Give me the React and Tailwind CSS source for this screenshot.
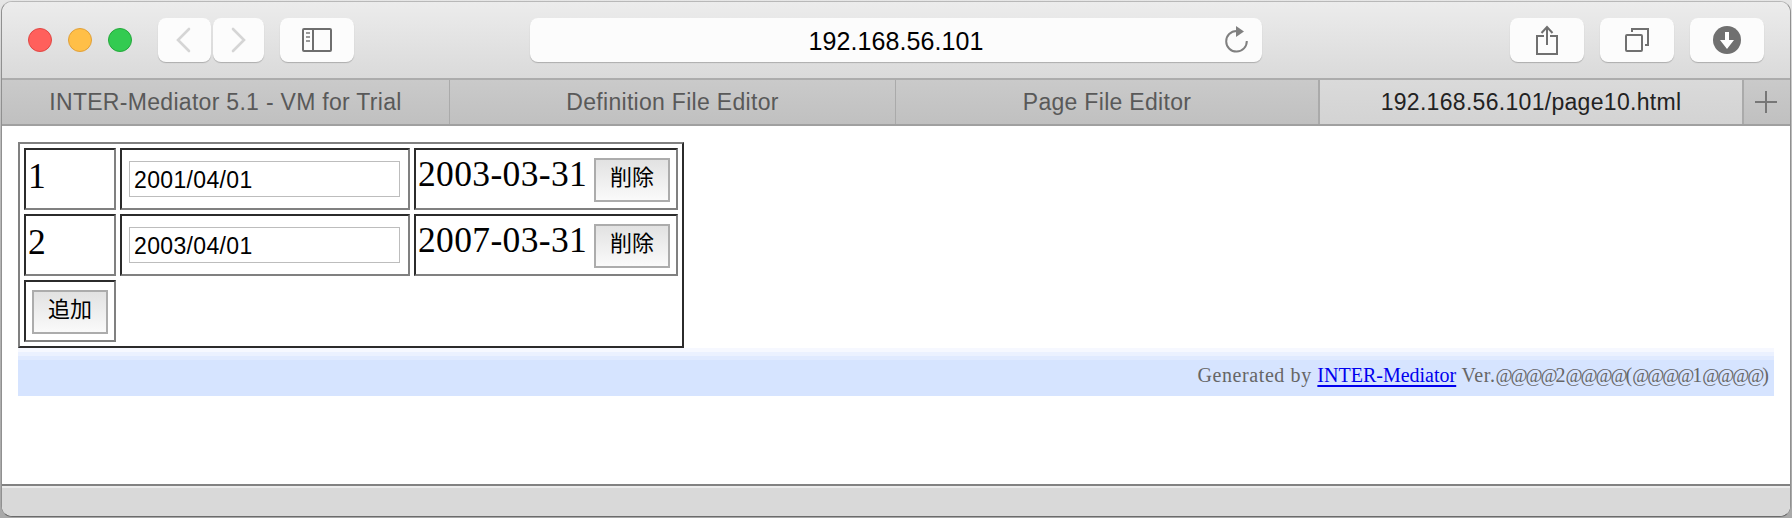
const btn = "flex h-11 items-center justify-center rounded-lg bg-[#fcfcfc] shadow-[0_1px_1px_rgba(0,0,0,0.22)]";
const tab = "flex h-full items-center justify-center border-[#aaaaaa] text-[23px] leading-none tracking-[0.3px]";
const cell = "border-2 border-t-[#2b2b2b] border-l-[#2b2b2b] border-r-[#808080] border-b-[#808080]";

function PushButton({ children }) {
  return (
    <button className="h-11 w-[76px] shrink-0 border-2 border-[#acacac] bg-linear-to-b from-[#e2e2e2] to-[#fafafa] pb-1 font-['Liberation_Sans','Noto_Sans_CJK_JP',sans-serif] text-[22px] leading-none text-black">
      {children}
    </button>
  );
}

function Row({ id, start, end }) {
  return (
    <div className="flex h-[62px] gap-1">
      <div className={`${cell} w-[92px] pt-1.5 pl-0.5 text-[35.5px] leading-[40px]`}>{id}</div>
      <div className={`${cell} w-[290px] pt-[11px] pl-[7px]`}>
        <input
          readOnly
          value={start}
          className="block h-9 w-[271px] border border-[#bdbdbd] bg-white pt-0.5 pl-1 font-['Liberation_Sans',sans-serif] text-[23px] tracking-[0.35px] outline-none"
        />
      </div>
      <div className={`${cell} flex w-[264px] items-start pr-1.5 pl-[2px]`}>
        <span className="pt-1 text-[35.5px] leading-[40px] tracking-[0.35px]">{end}</span>
        <div className="ml-auto pt-2">
          <PushButton>削除</PushButton>
        </div>
      </div>
    </div>
  );
}

function Ats() {
  return <span className="text-[18.5px] tracking-[-2.03px]">@@@@</span>;
}

export default function App() {
  return (
    <div className="h-[518px] w-[1792px] bg-linear-to-b from-[#e6e6e6] via-[#bcbcbc] via-25% to-[#a8a8a8] p-px font-['Liberation_Serif','Noto_Sans_CJK_JP',serif] text-black">
      <div className="flex h-[516px] flex-col overflow-hidden rounded-[11px] border border-t-[#b8b8b8] border-r-[#909090] border-b-[#6b6b6b] border-l-[#909090] bg-white">
        <header className="flex h-[78px] shrink-0 items-start border-b-2 border-[#acacac] bg-linear-to-b from-[#ececec] to-[#dadada] pt-4 pr-[26px] pl-[26px]">
          <div className="flex h-11 items-center gap-4">
            <span className="size-6 rounded-full border border-[#e04744] bg-[#ff605c]" />
            <span className="size-6 rounded-full border border-[#e0a03a] bg-[#ffbf47]" />
            <span className="size-6 rounded-full border border-[#24a83b] bg-[#33cb51]" />
          </div>
          <div className="ml-[26px] flex gap-0.5">
            <span className={`${btn} w-[53px] pr-1`}>
              <svg width="16" height="26" fill="none" stroke="#d5d5d5" strokeWidth="2.6" strokeLinecap="round"><path d="M14 2 3 13l11 11" /></svg>
            </span>
            <span className={`${btn} w-[51px]`}>
              <svg width="16" height="26" fill="none" stroke="#d5d5d5" strokeWidth="2.6" strokeLinecap="round"><path d="M2 2l11 11L2 24" /></svg>
            </span>
          </div>
          <span className={`${btn} ml-4 w-[74px]`}>
            <svg width="30" height="24" fill="none" stroke="#6e6e6e" strokeWidth="2">
              <rect x="1" y="1" width="28" height="22" rx="1" />
              <path d="M11 1v22" />
              <path d="M4 5h4M4 9h4M4 13h4" stroke="#9a9a9a" />
            </svg>
          </span>
          <div className={`${btn} ml-44 w-[732px] font-['Liberation_Sans',sans-serif] text-[25px] leading-none`}>
            <span className="ml-auto pt-[3px] pl-[38px] tracking-[0.1px]">192.168.56.101</span>
            <svg className="mr-[13px] ml-auto" width="25" height="28" fill="none" stroke="#808080" strokeWidth="2">
              <path d="M12.500 5a10.300 10.300 0 1 0 10.300 10" />
              <path d="M12 0v11l8-5.500z" fill="#808080" stroke="none" />
            </svg>
          </div>
          <div className="ml-auto flex gap-4">
            <span className={`${btn} w-[74px]`}>
              <svg width="24" height="32" fill="none" stroke="#707070" strokeWidth="2">
                <path d="M9 12H2v18h20V12h-7M12 21V3M6.500 9 12 3l5.500 6" />
              </svg>
            </span>
            <span className={`${btn} w-[74px]`}>
              <svg width="26" height="26" fill="none" stroke="#707070" strokeWidth="2">
                <rect x="2" y="8" width="16" height="16" rx="1" />
                <path d="M8 5V2h16v16h-3" />
              </svg>
            </span>
            <span className={`${btn} w-[74px]`}>
              <svg width="28" height="28">
                <circle cx="14" cy="14" r="14" fill="#707070" />
                <path d="M12 6h4v8h5l-7 9-7-9h5z" fill="#fff" />
              </svg>
            </span>
          </div>
        </header>
        <nav className="flex h-[46px] shrink-0 border-b-2 border-[#a0a0a0] bg-linear-to-b from-[#cacaca] to-[#c0c0c0] font-['Liberation_Sans',sans-serif] text-[#595959]">
          <div className={`${tab} w-[448px] border-r`}>INTER-Mediator 5.1 - VM for Trial</div>
          <div className={`${tab} w-[446px] border-r`}>Definition File Editor</div>
          <div className={`${tab} w-[424px] border-r-2`}>Page File Editor</div>
          <div className={`${tab} w-[424px] border-r-2 bg-linear-to-b from-[#dadada] to-[#d3d3d3] text-[#222222]`}>192.168.56.101/page10.html</div>
          <div className="flex flex-1 items-center justify-center pr-0.5">
            <svg width="22" height="22" stroke="#777777" strokeWidth="2"><path d="M0 11h22M11 0v22" /></svg>
          </div>
        </nav>
        <main className="flex-1 px-4 pt-4">
          <div className="flex h-[206px] w-[666px] flex-col gap-1 border-2 border-t-[#808080] border-r-[#2b2b2b] border-b-[#2b2b2b] border-l-[#808080] p-1">
            <Row id="1" start="2001/04/01" end="2003-03-31" />
            <Row id="2" start="2003/04/01" end="2007-03-31" />
            <div className={`${cell} h-[62px] w-[92px] pt-2 pl-1.5`}>
              <PushButton>追加</PushButton>
            </div>
          </div>
          <footer className="h-12 bg-[#d6e4ff]">
            <div className="h-1 bg-[#f6f8ff]" />
            <div className="h-1 bg-[#ebf1ff]" />
            <div className="h-1 bg-[#e0eaff]" />
            <p className="flex justify-end pr-[5px] text-[20px] leading-[30px] whitespace-pre text-[#666666]">
              <span className="tracking-[0.6px]">Generated by </span>
              <a className="text-[#0000ee] underline underline-offset-[3px]" href="#top">INTER-Mediator</a>
              <span><span className="tracking-[0.6px]"> Ver.</span><Ats />2<Ats />(<Ats />1<Ats />)</span>
            </p>
          </footer>
        </main>
        <div className="h-8 shrink-0 border-t-2 border-[#828282] bg-[#d9d9d9]">
          <div className="h-0.5 bg-[#ececec]" />
        </div>
      </div>
    </div>
  );
}
